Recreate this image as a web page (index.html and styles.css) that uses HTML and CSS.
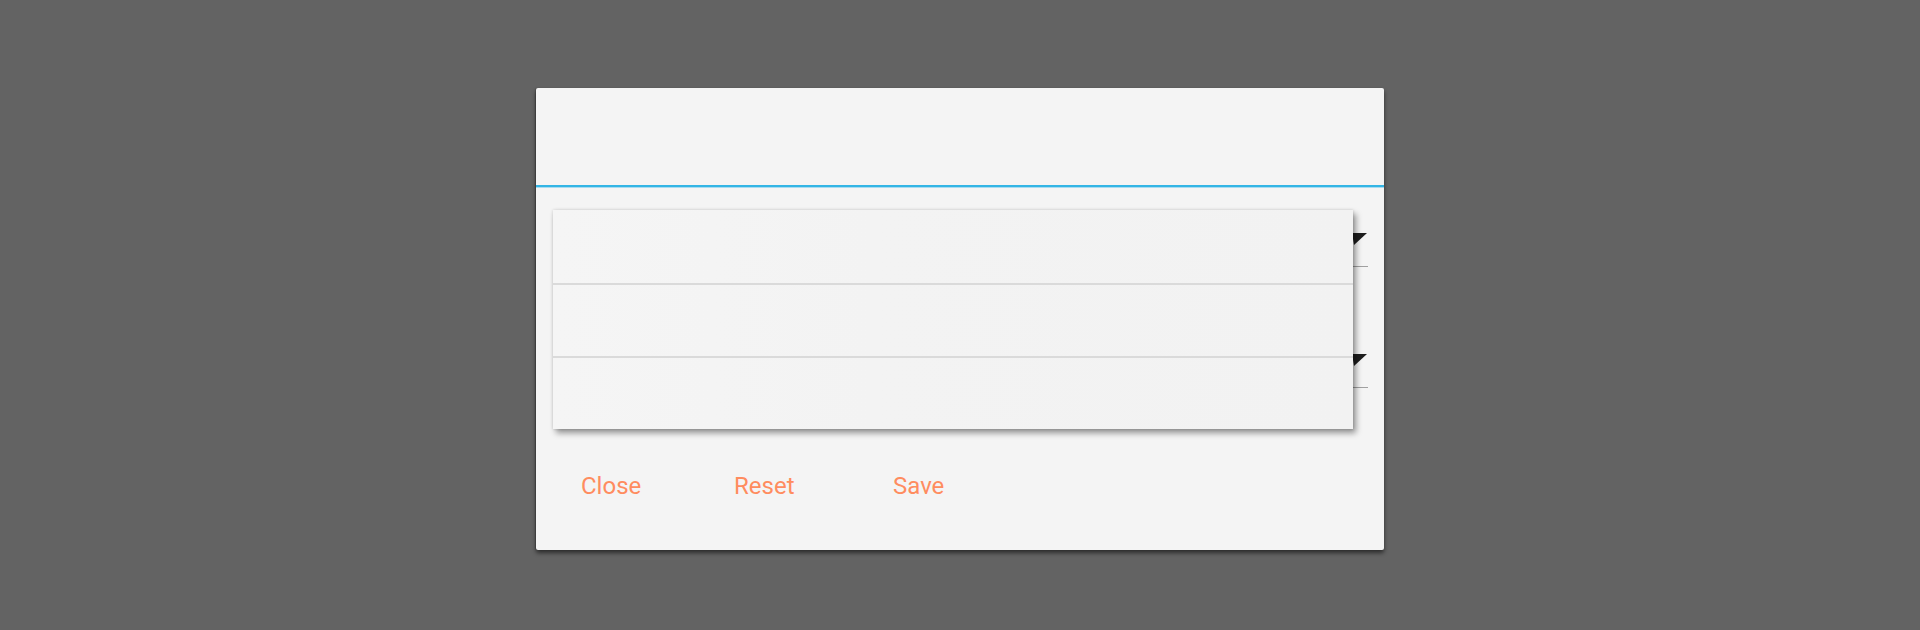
FILE: index.html
```html
<!DOCTYPE html>
<html>

<head>
	<meta name="viewport" content="width=device-width, initial-scale=1" />
	<link rel="stylesheet" href="styles.css">
</head>

<body>
	<div class="dialog">
		<div class="dialogTitle"></div>
		<div class="titleDivider"></div>

		<div class="dialogBody">
			<div class="field firstField">
				<div class="spinner">
					<svg class="spinnerArrow" width="15" height="12" viewBox="0 0 15 12">
						<polygon points="0,0 15,0 2,12" fill="#1e1e1e" />
					</svg>
				</div>
			</div>
			<div class="field">
				<div class="spinner">
					<svg class="spinnerArrow" width="15" height="12" viewBox="0 0 15 12">
						<polygon points="0,0 15,0 2,12" fill="#1e1e1e" />
					</svg>
				</div>
			</div>
		</div>

		<div class="buttonBar">
			<a class="dialogButton">Close</a>
			<a class="dialogButton">Reset</a>
			<a class="dialogButton">Save</a>
		</div>

		<!-- open spinner dropdown -->
		<div class="dropdown">
			<div class="dropdownItem"></div>
			<div class="dropdownItem"></div>
			<div class="dropdownItem"></div>
		</div>
	</div>
</body>

</html>
```

FILE: styles.css
```css
body {
	margin: 0;
	background-color: #636363;
	font-family: Roboto, "Liberation Sans", sans-serif;
	height: 630px;
	overflow: hidden;
}

.dialog {
	position: relative;
	width: 848px;
	height: 462px;
	margin: 88px auto 0 auto;
	background-color: #f4f4f4;
	border-radius: 2px;
	box-shadow: 0px 3px 4px rgba(0, 0, 0, 0.55), -1px 0px 1px rgba(0, 0, 0, 0.2);
}

.dialogTitle {
	height: 97px;
}

.titleDivider {
	height: 2px;
	background-color: #33b5e5;
	box-shadow: 0px 1px 0px #a8dcf0;
}

.dialogBody {
	padding: 0 16px 0 56px;
}

.field {
	height: 121px;
	display: flex;
	flex-direction: column;
	justify-content: flex-end;
}

.firstField {
	height: 80px;
}

.spinner {
	height: 40px;
	border-bottom: 1px solid #a0a0a0;
	display: flex;
	justify-content: flex-end;
	align-items: flex-start;
}

.spinnerArrow {
	margin-top: 7px;
	margin-right: 1px;
}

.buttonBar {
	display: grid;
	grid-template-columns: 153px 159px auto;
	padding-left: 45px;
	margin-top: 84px;
}

.dialogButton {
	color: #ff8c5f;
	font-size: 24px;
	line-height: 28px;
	cursor: pointer;
}

.dropdown {
	position: absolute;
	left: 17px;
	top: 122px;
	width: 800px;
	background: linear-gradient(to right, #f5f5f5 0%, #f3f3f3 40%, #f2f2f2 100%);
	box-shadow: 3px 4px 6px rgba(0, 0, 0, 0.4), 0px 0px 3px rgba(0, 0, 0, 0.15);
}

.dropdownItem {
	height: 73px;
}

.dropdownItem + .dropdownItem {
	border-top: 2px solid #dadada;
	height: 71px;
}
```
